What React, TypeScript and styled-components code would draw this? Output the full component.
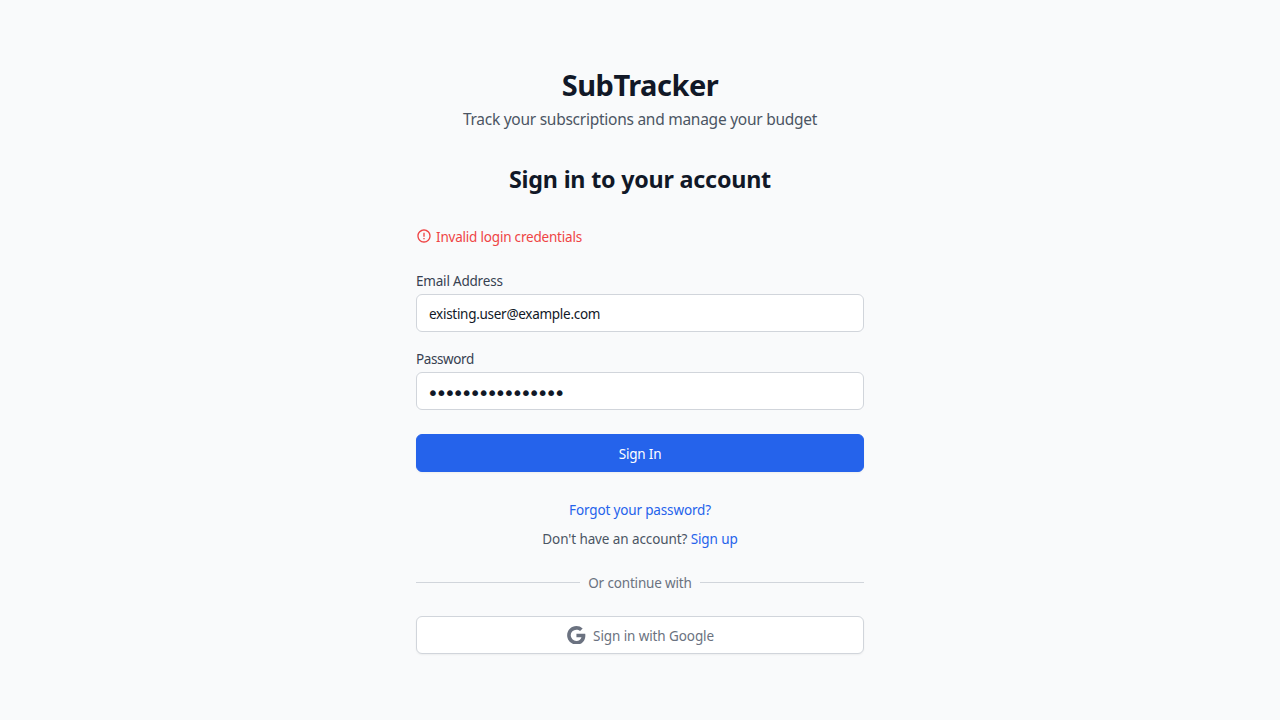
import React from 'react';
import styled, { createGlobalStyle } from 'styled-components';
import { MdErrorOutline } from 'react-icons/md';

const GlobalStyle = createGlobalStyle`
  *, *::before, *::after { box-sizing: border-box; }
  body { margin: 0; background: #f9fafb; font-family: "Noto Sans", sans-serif; }
  h1, h2, p { margin: 0; }
`;

const Page = styled.main`
  min-height: 100vh;
  display: flex;
  justify-content: center;
  padding-top: 67px;
  font-size: 13.5px;
  line-height: 20px;
`;

const Panel = styled.div`
  width: 448px;
  display: flex;
  flex-direction: column;
`;

const Text = styled.span<{ $track: number }>`
  letter-spacing: ${(p) => p.$track}px;
`;

const Header = styled.header`
  text-align: center;
  color: #111827;
`;

const Title = styled.h1`
  font-size: 29px;
  line-height: 36px;
  font-weight: 700;
  letter-spacing: -0.5px;
`;

const Subtitle = styled.p`
  margin-top: 4px;
  font-size: 15.5px;
  line-height: 24px;
  letter-spacing: -0.26px;
  color: #4b5563;
`;

const Heading = styled.h2`
  margin-top: 32px;
  font-size: 23.3px;
  line-height: 32px;
  font-weight: 700;
  letter-spacing: -0.22px;
`;

const Alert = styled.div`
  display: flex;
  align-items: flex-start;
  gap: 4px;
  margin-top: 32px;
  color: #ef4444;
  height: 20px;
  svg { flex: none; margin-top: 1px; }
`;

const Form = styled.form`
  display: flex;
  flex-direction: column;
  margin-top: 24px;
`;

const Field = styled.div`
  display: flex;
  flex-direction: column;
  gap: 3px;
  margin-bottom: 17px;
`;

const Label = styled.label<{ $track: number }>`
  color: #374151;
  letter-spacing: ${(p) => p.$track}px;
`;

const Input = styled.input`
  height: 38px;
  padding: 1px 12px 0;
  border: 1px solid #d1d5db;
  border-radius: 6px;
  background: #fff;
  color: #111827;
  font: inherit;
  letter-spacing: -0.28px;
  outline: none;
`;

const PasswordInput = styled(Input)`
  padding: 4px 12px 0 10px;
  font-family: "DejaVu Sans", sans-serif;
  font-size: 20px;
  letter-spacing: -3.35px;
`;

const Button = styled.button<{ $primary?: boolean }>`
  display: flex;
  align-items: center;
  justify-content: center;
  gap: 7.5px;
  width: 100%;
  height: 38px;
  padding: 0;
  border: 1px solid ${(p) => (p.$primary ? '#2563eb' : '#d1d5db')};
  border-radius: 6px;
  background: ${(p) => (p.$primary ? '#2563eb' : '#fff')};
  color: ${(p) => (p.$primary ? '#fff' : '#6b7280')};
  box-shadow: 0 1px 2px rgba(0, 0, 0, 0.05);
  font: inherit;
  span { padding-top: 2px; }
`;

const Submit = styled(Button)`
  margin-top: 7px;
`;

const GoogleButton = styled(Button)`
  padding-left: 1px;
`;

const Links = styled.div`
  display: flex;
  flex-direction: column;
  align-items: center;
  gap: 9px;
  margin-top: 28px;
  color: #4b5563;
`;

const Link = styled.a<{ $track: number }>`
  color: #2563eb;
  text-decoration: none;
  letter-spacing: ${(p) => p.$track}px;
`;

const Divider = styled.div`
  display: flex;
  gap: 8px;
  margin: 24px 0 23px;
  color: #6b7280;
  &::before, &::after {
    content: '';
    flex: 1;
    height: 1px;
    margin-top: 9px;
    background: #d1d5db;
  }
`;

const GoogleLogo = () => (
  <svg width="18.6" height="18.6" viewBox="2.4 2 20 20" fill="currentColor" aria-hidden="true">
    <path d="M12.545 10.239v3.821h5.445c-.712 2.315-2.647 3.972-5.445 3.972a6.033 6.033 0 1 1 0-12.064c1.498 0 2.866.549 3.921 1.453l2.814-2.814A9.969 9.969 0 0 0 12.545 2C7.021 2 2.543 6.477 2.543 12s4.478 10 10.002 10c8.396 0 10.249-7.85 9.426-11.748l-9.426-.013z" />
  </svg>
);

export default function App() {
  return (
    <Page>
      <GlobalStyle />
      <Panel>
        <Header>
          <Title>SubTracker</Title>
          <Subtitle>Track your subscriptions and manage your budget</Subtitle>
          <Heading>Sign in to your account</Heading>
        </Header>
        <Alert>
          <MdErrorOutline size={16} />
          <Text $track={-0.2}>Invalid login credentials</Text>
        </Alert>
        <Form>
          <Field>
            <Label htmlFor="email" $track={-0.2}>Email Address</Label>
            <Input id="email" type="email" defaultValue="existing.user@example.com" />
          </Field>
          <Field>
            <Label htmlFor="password" $track={-0.4}>Password</Label>
            <PasswordInput id="password" type="password" defaultValue="correcthorsebatt" />
          </Field>
          <Submit $primary type="button"><Text $track={-0.2}>Sign In</Text></Submit>
        </Form>
        <Links>
          <Link href="#" $track={-0.15}>Forgot your password?</Link>
          <p><Text $track={-0.1}>Don't have an account? </Text><Link href="#" $track={-0.1}>Sign up</Link></p>
        </Links>
        <Divider><Text $track={-0.16}>Or continue with</Text></Divider>
        <GoogleButton type="button">
          <GoogleLogo />
          <Text $track={-0.1}>Sign in with Google</Text>
        </GoogleButton>
      </Panel>
    </Page>
  );
}
